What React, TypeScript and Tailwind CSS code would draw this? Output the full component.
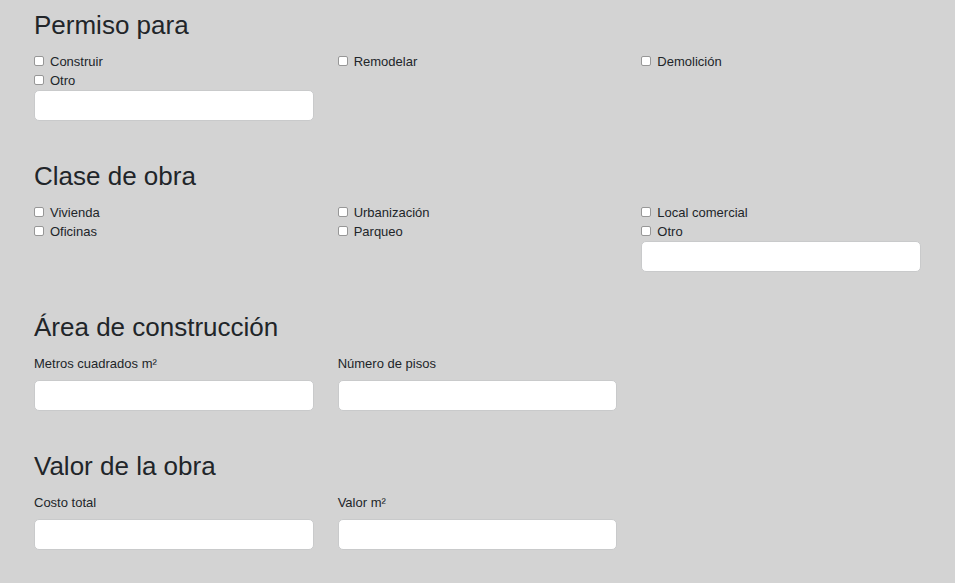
import { useId } from "react";
import type { ReactNode } from "react";

const fieldClass =
  "block h-[31px] w-full rounded-[5px] border border-[#c9cacb] bg-white px-2";

function LabeledField({ label }: { label: string }) {
  const id = useId();
  return (
    <div>
      <label htmlFor={id} className="mb-[7px] block">
        {label}
      </label>
      <input id={id} type="text" className={fieldClass} />
    </div>
  );
}

function Option({ label, other }: { label: string; other?: string }) {
  return (
    <div>
      <label className="flex w-fit items-center gap-1.5">
        <input
          type="checkbox"
          className="mb-0.5 size-2.5 appearance-none rounded-[2px] border border-[#979797] bg-white checked:bg-[#0075ff]"
        />
        {label}
      </label>
      {other && <input type="text" aria-label={other} className={fieldClass} />}
    </div>
  );
}

function Section({ title, children }: { title: string; children: ReactNode }) {
  return (
    <section>
      <h2 className="mb-[11px] text-[26px] leading-[31px]">{title}</h2>
      <div className="grid grid-cols-3 items-start gap-x-6">{children}</div>
    </section>
  );
}

export default function App() {
  return (
    <main className="min-h-screen bg-[#d3d3d3] px-[34px] pt-2.5 pb-8 font-['Liberation_Sans',Arial,sans-serif] text-[13px] leading-[19px] text-[#212529]">
      <form className="flex flex-col gap-10">
        <Section title="Permiso para">
          <Option label="Construir" />
          <Option label="Remodelar" />
          <Option label="Demolición" />
          <Option label="Otro" other="Otro permiso" />
        </Section>
        <Section title="Clase de obra">
          <Option label="Vivienda" />
          <Option label="Urbanización" />
          <Option label="Local comercial" />
          <Option label="Oficinas" />
          <Option label="Parqueo" />
          <Option label="Otro" other="Otra clase de obra" />
        </Section>
        <Section title="Área de construcción">
          <LabeledField label="Metros cuadrados m²" />
          <LabeledField label="Número de pisos" />
        </Section>
        <Section title="Valor de la obra">
          <LabeledField label="Costo total" />
          <LabeledField label="Valor m²" />
        </Section>
      </form>
    </main>
  );
}
